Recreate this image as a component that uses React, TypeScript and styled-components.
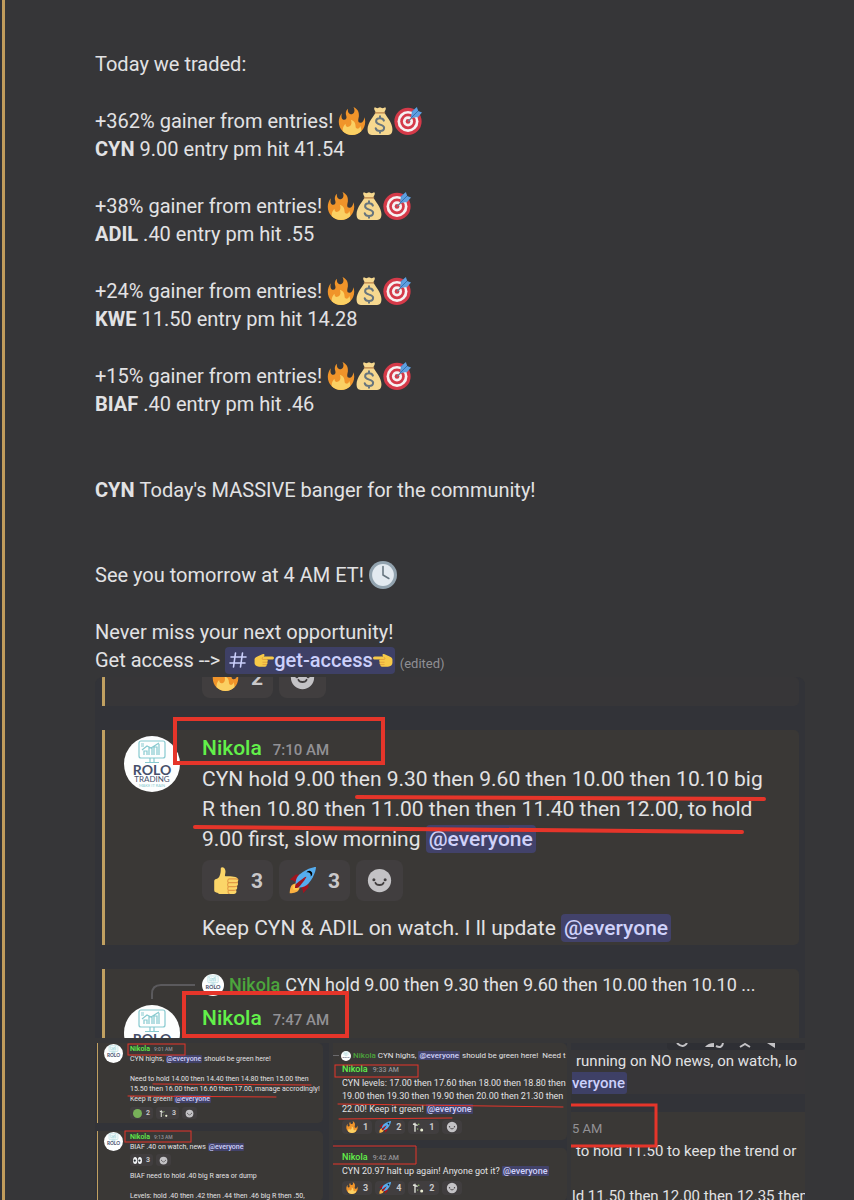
import React from "react";
import styled, { createGlobalStyle, css } from "styled-components";

type Size = "lg" | "md" | "sm";

/* Text and spacing scale of a quoted chat, from full size down to thumbnails */
const scale = {
  lg: { font: 21, line: 30, time: 15, timeLine: 15, reply: 18, replyLine: 28, avatar: 56, pad: 19, gutter: 22, chipH: 41, chipPad: 10, chipGap: 6, chipFont: 21, icon: 27, icGap: 12, radius: 8, bar: 3, mention: 4 },
  md: { font: 9, line: 13, time: 7, timeLine: 13, reply: 8, replyLine: 13, avatar: 0, pad: 9, gutter: 0, chipH: 14, chipPad: 4, chipGap: 3, chipFont: 9, icon: 12, icGap: 5, radius: 4, bar: 0, mention: 1 },
  sm: { font: 7, line: 10, time: 5, timeLine: 10, reply: 7, replyLine: 10, avatar: 19, pad: 6, gutter: 7, chipH: 12, chipPad: 3, chipGap: 3, chipFont: 7, icon: 9, icGap: 4, radius: 3, bar: 1, mention: 1 },
};

const Global = createGlobalStyle`
  * { box-sizing: border-box; }
  body {
    margin: 0;
    background: #363638;
    color: #e2e2e4;
    font-family: Roboto, "Liberation Sans", sans-serif;
    font-size: 20px;
  }
  a { text-decoration: none; }
  button { font: inherit; color: inherit; border: 0; }
  p { margin: 0; }
`;

const Message = styled.main`
  margin-left: 2px;
  border-left: 3px solid #c09c5c;
  box-shadow: -2px 0 0 #303136;
  padding: 50px 49px 0 90px;
`;

const Lines = styled.section<{ $gap?: number }>`
  line-height: 28px;
  margin-bottom: ${(p) => p.$gap ?? 29}px;
`;

const Line = styled.p`
  display: flex;
  align-items: center;
  gap: 5px;
  height: 28px;
  white-space: nowrap;
`;

const Icons = styled.span`
  display: flex;
`;

const ChannelLink = styled.a`
  display: flex;
  align-items: center;
  height: 27px;
  padding: 0 2px;
  border-radius: 4px;
  background: #3e4066;
  color: #ccd0fb;
  font-weight: 500;
`;

const Edited = styled.small`
  font-size: 13px;
  line-height: 20px;
  color: #8f8f94;
  align-self: flex-end;
`;

const Gallery = styled.section`
  display: grid;
  gap: 5px;
`;

const Thumbs = styled.div`
  display: grid;
  grid-template-columns: repeat(3, 1fr);
  gap: 4px;
`;

const Tile = styled.article<{ $height: number; $round?: string; $inset?: number }>`
  position: relative;
  overflow: hidden;
  height: ${(p) => p.$height}px;
  border-radius: ${(p) => p.$round ?? "0"};
  padding: 0 ${(p) => (p.$inset ? 6 : 0)}px 0 ${(p) => p.$inset ?? 0}px;
  background: #323338;
  min-width: 0;
`;

const Card = styled.div<{ $size: Size; $gap: number; $plain?: boolean }>`
  display: flex;
  gap: ${(p) => scale[p.$size].gutter}px;
  margin-bottom: ${(p) => p.$gap}px;
  padding-left: ${(p) => scale[p.$size].pad}px;
  border-left: ${(p) => scale[p.$size].bar}px solid #c0a061;
  border-radius: 0 5px 5px 0;
  background: ${(p) => (p.$plain ? "#373638" : "#3a3836")};
  white-space: nowrap;
`;

const Side = styled.div<{ $size: Size; $top: number }>`
  flex: none;
  width: ${(p) => scale[p.$size].avatar}px;
  padding-top: ${(p) => p.$top}px;
`;

const Body = styled.div<{ $top: number; $bottom: number }>`
  padding: ${(p) => p.$top}px 0 ${(p) => p.$bottom}px;
  min-width: 0;
`;

const ClippedTop = styled.div`
  display: flex;
  align-items: flex-end;
  height: 21px;
`;

const Spacer = styled.div<{ $h: number }>`
  height: ${(p) => p.$h}px;
`;

const Header = styled.header<{ $size: Size }>`
  display: flex;
  align-items: baseline;
  gap: ${(p) => Math.round(scale[p.$size].font / 2)}px;
  font-size: ${(p) => scale[p.$size].font}px;
  line-height: ${(p) => scale[p.$size].line}px;
`;

const Name = styled.strong<{ $dim?: boolean }>`
  font-weight: 500;
  color: ${(p) => (p.$dim ? "#4ca53c" : "#62f04a")};
`;

const Time = styled.time<{ $size: Size }>`
  font-size: ${(p) => scale[p.$size].time}px;
  line-height: ${(p) => scale[p.$size].timeLine}px;
  font-weight: 500;
  color: #929195;
`;

const Text = styled.p<{ $size: Size }>`
  font-size: ${(p) => scale[p.$size].font}px;
  line-height: ${(p) => scale[p.$size].line}px;
  min-height: ${(p) => scale[p.$size].line}px;
`;

const Reply = styled.p<{ $size: Size }>`
  display: flex;
  align-items: center;
  gap: ${(p) => scale[p.$size].mention + 1}px;
  font-size: ${(p) => scale[p.$size].reply}px;
  line-height: ${(p) => scale[p.$size].replyLine}px;
`;

const ReplyLead = styled.i`
  width: 6px;
  height: 1px;
  margin-left: -9px;
  background: #6b6a6d;
`;

const Mention = styled.a<{ $size: Size }>`
  padding: ${(p) => (p.$size === "lg" ? "2px 3px" : "0 1px")};
  border-radius: ${(p) => scale[p.$size].mention}px;
  background: #42426a;
  color: #d0d2fa;
  font-weight: 500;
`;

const Reactions = styled.div<{ $size: Size; $after: number }>`
  display: flex;
  gap: ${(p) => scale[p.$size].chipGap}px;
  margin-bottom: ${(p) => p.$after}px;
`;

const Chip = styled.button<{ $size: Size }>`
  ${(p) => {
    const s = scale[p.$size];
    return css`
      display: flex;
      align-items: center;
      gap: ${s.icGap}px;
      height: ${s.chipH}px;
      padding: 0 ${s.chipPad}px;
      border-radius: ${s.radius}px;
      font-size: ${s.chipFont}px;
    `;
  }}
  background: #413e3f;
  color: #c9c8ca;
  font-weight: 700;
`;

const Marks = styled.svg`
  position: absolute;
  inset: 0;
  width: 100%;
  height: 100%;
  pointer-events: none;
  fill: none;
  stroke: #e5352a;
  stroke-linecap: round;
`;

const Spine = styled.svg`
  display: block;
  margin-left: 27px;
  overflow: visible;
`;

const Glyph = styled.svg`
  display: block;
  flex: none;
`;

const Crop = styled.div`
  display: flex;
  flex-direction: column;
  font-size: 15px;
  line-height: 22px;
  white-space: nowrap;
`;

const CropTools = styled.div`
  display: flex;
  align-self: flex-end;
  gap: 14px;
  width: 138px;
  height: 7px;
  padding-left: 8px;
  background: #2e2f34;
  border-radius: 0 0 4px 4px;
`;

const CropRow = styled.p<{ $top?: number; $left?: number; $fill?: string }>`
  padding: ${(p) => p.$top ?? 0}px 0 0 ${(p) => p.$left ?? 1}px;
  background: ${(p) => p.$fill ?? "#373638"};
`;

const CropMention = styled.a`
  display: inline-block;
  padding-right: 2px;
  border-radius: 0 3px 3px 0;
  background: #3e4066;
  color: #ccd0fb;
  font-weight: 500;
`;

const CropTime = styled.time`
  display: block;
  font-size: 13px;
  color: #929195;
`;

const Band = styled.div`
  height: 18px;
  background: #323338;
`;

type IconProps = { s: number };

const Fire = ({ s }: IconProps) => (
  <Glyph width={s} height={s} viewBox="0 0 36 36" aria-hidden>
    <path fill="#f0942a" d="M35 19c0-2.062-.367-4.039-1.04-5.868-.46 5.389-3.333 8.157-6.335 6.868-2.812-1.208-.917-5.917-.777-8.164.236-3.809-.012-8.169-6.931-11.794 2.875 5.5.333 8.917-2.333 9.125-2.958.231-5.667-2.542-4.667-7.042-3.238 2.386-3.332 6.402-2.333 9 1.042 2.708-.042 4.958-2.583 5.208-2.84.28-4.418-3.041-2.963-8.333C2.52 10.965 1 14.805 1 19c0 9.389 7.611 17 17 17s17-7.611 17-17z" />
    <path fill="#fbd063" d="M28.394 23.999c.148 3.084-2.561 4.293-4.019 3.709-2.106-.843-1.541-2.291-2.083-5.291s-2.625-5.083-5.708-6c2.25 6.333-1.247 8.667-3.08 9.084-1.872.426-3.753-.001-3.968-4.007C7.352 23.668 6 26.676 6 30c0 .368.023.73.055 1.09C9.125 34.124 13.342 36 18 36s8.875-1.876 11.945-4.91c.032-.36.055-.722.055-1.09 0-2.187-.584-4.236-1.606-6.001z" />
  </Glyph>
);

const MoneyBag = ({ s }: IconProps) => (
  <Glyph width={s} height={s} viewBox="0 0 36 36" aria-hidden>
    <path fill="#f6d88f" d="M12.500 7C11.500 4.500 9.500 2 11 .500c1-.500 2.500 1 3.500 1S17 .200 18 .200s2 1.300 3.500 1.300S24 0 25 .500C26.500 2 24.500 4.500 23.500 7c2 4 10.500 13 10.500 21.500C34 34.500 31 36 27 36H9c-4 0-7-1.500-7-7.500C2 20 10.500 11 12.500 7z" />
    <path stroke="#b9814a" strokeWidth="1.800" strokeLinecap="round" d="M12 7.500h12" />
    <path fill="none" stroke="#67757e" strokeWidth="2.600" strokeLinecap="round" d="M23 17.500c-.600-2-2.500-3-5-3-3 0-5 1.500-5 3.900 0 5.700 10.300 2.800 10.300 8.300 0 2.500-2.300 4.100-5.300 4.100s-5-1.300-5.500-3.500M18 12v2.300M18 31v2.200" />
  </Glyph>
);

const Target = ({ s }: IconProps) => (
  <Glyph width={s} height={s} viewBox="0 0 36 36" aria-hidden>
    <circle cx="18" cy="18.500" r="17.500" fill="#d53a49" />
    <circle cx="18" cy="18.500" r="13.500" fill="#f6f2f3" />
    <circle cx="18" cy="18.500" r="10" fill="#d53a49" />
    <circle cx="18" cy="18.500" r="6.500" fill="#f6f2f3" />
    <circle cx="18" cy="18.500" r="3" fill="#d53a49" />
    <path stroke="#6e7f93" strokeWidth="1.800" d="M18 18.500l8-8" />
    <path fill="#4a90d0" d="M22 14l1-8.500L29.500 0l1.500 5z" />
    <path fill="#5e9fe0" d="M22 14l9-1L36 7l-5-2-2-4.500L24 6z" />
    <path stroke="#2f6fae" strokeWidth="1.200" d="M22 14l9-9" />
  </Glyph>
);

const Clock = ({ s }: IconProps) => (
  <Glyph width={s} height={s} viewBox="0 0 36 36" aria-hidden>
    <circle cx="18" cy="18" r="18" fill="#92a3af" />
    <circle cx="18" cy="18" r="14" fill="#e3eaf0" />
    <path fill="none" stroke="#66757f" strokeWidth="2" strokeLinecap="round" strokeLinejoin="round" d="M18 7v11l7.500 4.500" />
  </Glyph>
);

const Point = ({ s, flip }: IconProps & { flip?: boolean }) => (
  <Glyph width={s} height={s} viewBox="0 0 36 36" aria-hidden>
    <g transform={flip ? "translate(36 0) scale(-1 1)" : undefined}>
      <path fill="#f7c948" d="M1 17c0-3 4-5 8-6.500C12 9 14 7 17 7c2.500 0 2.500 3 .500 4.500H33c4 0 4 5.500 0 5.500H23c2.500.800 2.500 4 .500 4.800 1.500 1.500.800 4-1 4.500.800 2-.500 3.700-2.500 3.700H9c-5 0-8-3-8-7z" />
      <path fill="none" stroke="#d9913c" strokeWidth="1.200" strokeLinecap="round" d="M23.500 17H16c-1.500 0-2-2-.500-3.500M23.500 22H16M22.500 26.300H16" />
    </g>
  </Glyph>
);

const Hash = () => (
  <Glyph width="22" height="22" viewBox="0 0 22 22" aria-hidden>
    <path fill="none" stroke="#ccd0fb" strokeWidth="1.600" strokeLinecap="round" d="M8.500 4L6.500 18M15.500 4l-2 14M4 8h15M3 14h15" />
  </Glyph>
);

const Thumb = ({ s }: IconProps) => (
  <Glyph width={s} height={s} viewBox="0 0 36 36" aria-hidden>
    <path fill="#fbd568" d="M34.956 17.916c0-.503-.12-.975-.321-1.404-1.341-4.326-7.619-4.010-16.549-4.221-1.493-.035-.639-1.798-.115-5.668.341-2.517-1.282-6.382-4.010-6.382-4.498 0-.171 3.548-4.148 12.322-2.125 4.688-6.875 2.062-6.875 6.771v10.719c0 1.833.180 3.595 2.758 3.885C8.195 34.219 7.633 36 11.238 36h18.044c1.838 0 3.333-1.496 3.333-3.334 0-.762-.267-1.456-.698-2.018 1.020-.571 1.720-1.649 1.720-2.899 0-.760-.266-1.454-.696-2.015 1.023-.570 1.725-1.649 1.725-2.901 0-.909-.368-1.733-.961-2.336.757-.611 1.251-1.535 1.251-2.581z" />
    <path fill="none" stroke="#e29a45" strokeWidth="1.500" strokeLinecap="round" d="M34 20.300c-.800.500-2 .600-3 .600h-8.500M33 25.700c-.800.400-2 .500-3 .500h-7.500M31.500 30.700c-.800.300-1.500.400-2.500.400h-6.500M23 15.800h8c1.500 0 2.700 0 3.500.700M23.500 15.800c-3 0-3.500 5-.800 5.100-2.500.300-2.500 5-.200 5.300-2 .300-2 4.700 0 4.900-1.500.400-1.500 4 .500 4.500" />
  </Glyph>
);

const Rocket = ({ s }: IconProps) => (
  <Glyph width={s} height={s} viewBox="0 0 36 36" aria-hidden>
    <path fill="#a0141e" d="M1 17l8-7 16 1 1 16-7 8s.001-5.999-6-12-12-6-12-6z" />
    <path fill="#fbb040" d="M.973 35s-.036-7.979 2.985-11S15 21.187 15 21.187 14.999 29 11.999 32c-3 3-11.026 3-11.026 3z" />
    <circle cx="9" cy="27" r="4" fill="#ffcc4d" />
    <path fill="#55acee" d="M35.999 0s-10 0-22 10c-6 5-6 14-4 16s11 2 16-4c10-12 10-22 10-22z" />
    <path d="M26.999 5c-1.623 0-3.013.971-3.641 2.360.502-.227 1.055-.360 1.641-.360 2.209 0 4 1.791 4 4 0 .586-.133 1.139-.359 1.640 1.389-.627 2.359-2.017 2.359-3.640 0-2.209-1.791-4-4-4z" />
    <path fill="#a0141e" d="M8 28s0-4 1-5 13.001-10.999 14-10-9.001 13-10.001 14S8 28 8 28z" />
  </Glyph>
);

const Smile = ({ s }: IconProps) => (
  <Glyph width={s} height={s} viewBox="0 0 36 36" aria-hidden>
    <circle cx="18" cy="18" r="15.500" fill="#c3c2c5" />
    <circle cx="10.500" cy="17" r="2" fill="#423f40" />
    <circle cx="25.500" cy="17" r="2" fill="#423f40" />
    <path fill="none" stroke="#423f40" strokeWidth="2.400" strokeLinecap="round" d="M12.500 21c1.500 4 9.500 4 11 0" />
  </Glyph>
);

const Dot = ({ s }: IconProps) => (
  <Glyph width={s} height={s} viewBox="0 0 36 36" aria-hidden>
    <circle cx="18" cy="18" r="18" fill="#78b159" />
  </Glyph>
);

const Eyes = ({ s }: IconProps) => (
  <Glyph width={s} height={s} viewBox="0 0 36 36" aria-hidden>
    <ellipse cx="8.500" cy="18" rx="8.500" ry="14" fill="#f0f2f4" />
    <ellipse cx="27.500" cy="18" rx="8.500" ry="14" fill="#f0f2f4" />
    <circle cx="7" cy="18" r="4.500" fill="#292f33" />
    <circle cx="26" cy="18" r="4.500" fill="#292f33" />
  </Glyph>
);

const Sparks = ({ s }: IconProps) => (
  <Glyph width={s} height={s} viewBox="0 0 36 36" aria-hidden>
    <path fill="none" stroke="#e4e6de" strokeWidth="4" d="M9 32V10M3 9l14 4M9 5v6" />
    <circle cx="20" cy="10" r="2.500" fill="#8fb56b" />
    <circle cx="29" cy="27" r="4.500" fill="#e9ecd2" />
    <circle cx="17" cy="24" r="2" fill="#8fb56b" />
  </Glyph>
);

const Avatar = ({ s }: IconProps) => (
  <Glyph width={s} height={s} viewBox="0 0 56 56" role="img" aria-label="Rolo Trading">
    <circle cx="28" cy="28" r="28" fill="#fdfefe" />
    <g fill="none" stroke="#86c9cf" strokeWidth="1.200">
      <rect x="15" y="5" width="26" height="17" rx="2" />
      <path d="M26 22v4M30 22v4M21 26.500h14M20 19v-4h3v4M25 19v-7h3v7M30 19V11h3v8M35 19V8M17 8h3M17 10h3M18 14l5-4 4 2 8-5" />
    </g>
    <text x="28" y="39" textAnchor="middle" fontFamily="Lato, sans-serif" fontSize="14" fontWeight="700" fill="#46506b">ROLO</text>
    {s > 30 && (
      <>
        <text x="28" y="46" textAnchor="middle" fontFamily="Lato, sans-serif" fontSize="8" fill="#46506b">TRADING</text>
        <text x="28" y="51" textAnchor="middle" fontFamily="Lato, sans-serif" fontSize="4" fill="#86c9cf">MAKE IT RAIN</text>
      </>
    )}
  </Glyph>
);

const gainers = [
  { pct: "+362%", ticker: "CYN", result: "9.00 entry pm hit 41.54" },
  { pct: "+38%", ticker: "ADIL", result: ".40 entry pm hit .55" },
  { pct: "+24%", ticker: "KWE", result: "11.50 entry pm hit 14.28" },
  { pct: "+15%", ticker: "BIAF", result: ".40 entry pm hit .46" },
];

type Reaction = [React.ComponentType<IconProps>, number?];

const ReactionRow = ({ size, items, after = 0 }: { size: Size; items: Reaction[]; after?: number }) => (
  <Reactions $size={size} $after={after}>
    {items.map(([Icon, count], i) => (
      <Chip key={i} $size={size} type="button" aria-label={count ? undefined : "Add reaction"}>
        <Icon s={scale[size].icon} />
        {count}
      </Chip>
    ))}
  </Reactions>
);

const Author = ({ size, time }: { size: Size; time: string }) => (
  <Header $size={size}>
    <Name>Nikola</Name>
    <Time $size={size}>{time}</Time>
  </Header>
);

const Everyone = ({ size }: { size: Size }) => (
  <Mention $size={size} href="#everyone">@everyone</Mention>
);

const MainShot = () => (
  <Tile $height={361} $round="8px 8px 0 0" $inset={7}>
    <Card $size="lg" $gap={24} $plain>
      <Side $size="lg" $top={0} />
      <Body $top={0} $bottom={8}>
        <ClippedTop>
          <ReactionRow size="lg" items={[[Fire, 2], [Smile]]} />
        </ClippedTop>
      </Body>
    </Card>
    <Card $size="lg" $gap={24}>
      <Side $size="lg" $top={6}>
        <Avatar s={56} />
      </Side>
      <Body $top={3} $bottom={2}>
        <Author size="lg" time="7:10 AM" />
        <Spacer $h={1} />
        <Text $size="lg">CYN hold 9.00 then 9.30 then 9.60 then 10.00 then 10.10 big</Text>
        <Text $size="lg">R then 10.80 then 11.00 then then 11.40 then 12.00, to hold</Text>
        <Text $size="lg">9.00 first, slow morning <Everyone size="lg" /></Text>
        <Spacer $h={6} />
        <ReactionRow size="lg" items={[[Thumb, 3], [Rocket, 3], [Smile]]} after={12} />
        <Text $size="lg">Keep CYN &amp; ADIL on watch. I ll update <Everyone size="lg" /></Text>
      </Body>
    </Card>
    <Card $size="lg" $gap={0}>
      <Side $size="lg" $top={15}>
        <Spine width="44" height="21">
          <path d="M1 15V10Q1 1 10 1H44" fill="none" stroke="#5b5a5d" strokeWidth="2" />
        </Spine>
        <Avatar s={56} />
      </Side>
      <Body $top={2} $bottom={2}>
        <Reply $size="lg">
          <Avatar s={22} />
          <Name $dim>Nikola</Name>
          <span>CYN hold 9.00 then 9.30 then 9.60 then 10.00 then 10.10 ...</span>
        </Reply>
        <Spacer $h={4} />
        <Author size="lg" time="7:47 AM" />
      </Body>
    </Card>
    <Marks strokeWidth="4">
      <rect x="80" y="42" width="208" height="44" />
      <path d="M262 120L669 122M100 150L647 155" />
      <rect x="89" y="316" width="163" height="43" />
    </Marks>
  </Tile>
);

const MorningShot = () => (
  <Tile $height={157} $inset={2}>
    <Card $size="sm" $gap={8}>
      <Side $size="sm" $top={1}>
        <Avatar s={19} />
      </Side>
      <Body $top={1} $bottom={4}>
        <Author size="sm" time="9:01 AM" />
        <Text $size="sm">CYN highs, <Everyone size="sm" /> should be green here!</Text>
        <Text $size="sm" />
        <Text $size="sm">Need to hold 14.00 then 14.40 then 14.80 then 15.00 then</Text>
        <Text $size="sm">15.50 then 16.00 then 16.60 then 17.00, manage accrodingly!</Text>
        <Text $size="sm">Keep it green! <Everyone size="sm" /></Text>
        <Spacer $h={3} />
        <ReactionRow size="sm" items={[[Dot, 2], [Sparks, 3], [Smile]]} />
      </Body>
    </Card>
    <Card $size="sm" $gap={0}>
      <Side $size="sm" $top={1}>
        <Avatar s={19} />
      </Side>
      <Body $top={1} $bottom={0}>
        <Author size="sm" time="9:13 AM" />
        <Text $size="sm">BIAF .40 on watch, news <Everyone size="sm" /></Text>
        <Spacer $h={2} />
        <ReactionRow size="sm" items={[[Eyes, 3], [Smile]]} after={5} />
        <Text $size="sm">BIAF need to hold .40 big R area or dump</Text>
        <Text $size="sm" />
        <Text $size="sm">Levels: hold .40 then .42 then .44 then .46 big R then .50,</Text>
      </Body>
    </Card>
    <Marks strokeWidth="1">
      <rect x="33" y="1" width="57" height="11" />
      <path d="M58 41L216 42M33 53L181 54" />
      <rect x="30" y="88" width="66" height="11" />
    </Marks>
  </Tile>
);

const LevelsShot = () => (
  <Tile $height={157}>
    <Card $size="md" $gap={8}>
      <Body $top={6} $bottom={6}>
        <Reply $size="md">
          <ReplyLead />
          <Avatar s={10} />
          <Name $dim>Nikola</Name>
          <span>CYN highs, <Everyone size="md" /> should be green here!&nbsp; Need t</span>
        </Reply>
        <Spacer $h={1} />
        <Author size="md" time="9:33 AM" />
        <Text $size="md">CYN levels: 17.00 then 17.60 then 18.00 then 18.80 then</Text>
        <Text $size="md">19.00 then 19.30 then 19.90 then 20.00 then 21.30 then</Text>
        <Text $size="md">22.00! Keep it green! <Everyone size="md" /></Text>
        <Spacer $h={4} />
        <ReactionRow size="md" items={[[Fire, 1], [Rocket, 2], [Sparks, 1], [Smile]]} />
      </Body>
    </Card>
    <Card $size="md" $gap={0}>
      <Body $top={3} $bottom={6}>
        <Author size="md" time="9:42 AM" />
        <Text $size="md">CYN 20.97 halt up again! Anyone got it? <Everyone size="md" /></Text>
        <Spacer $h={3} />
        <ReactionRow size="md" items={[[Fire, 3], [Rocket, 4], [Sparks, 2], [Smile]]} />
      </Body>
    </Card>
    <Marks strokeWidth="1">
      <rect x="2" y="22" width="83" height="12" />
      <path d="M5 61L230 64M6 76L119 75M0 103H83V121H0" />
    </Marks>
  </Tile>
);

const TrendShot = () => (
  <Tile $height={157}>
    <Crop>
      <CropTools>
        <Glyph width="16" height="6"><path d="M2 0Q8 6 12 0" fill="none" stroke="#c3c2c5" strokeWidth="2" /></Glyph>
        <Glyph width="20" height="6"><path d="M0 4Q3 0 9 0V4z" fill="#c3c2c5" /><path d="M11 3q6 3 7-3" fill="none" stroke="#c3c2c5" strokeWidth="2" /></Glyph>
        <Glyph width="14" height="6"><path d="M1 4l5-3 5 3" fill="none" stroke="#c3c2c5" strokeWidth="2" /></Glyph>
        <Glyph width="14" height="6"><path d="M0 0h8v5z" fill="#c3c2c5" /></Glyph>
      </CropTools>
      <CropRow $left={5}>running on NO news, on watch, lo</CropRow>
      <CropRow><CropMention href="#everyone">veryone</CropMention></CropRow>
      <Band />
      <CropRow $fill="#3a3836" $top={6}><CropTime>5 AM</CropTime></CropRow>
      <CropRow $fill="#3a3836" $left={5}>to hold 11.50 to keep the trend or</CropRow>
      <CropRow $fill="#3a3836" $top={23}>ld 11.50 then 12.00 then 12.35 then</CropRow>
    </Crop>
    <Marks strokeWidth="3">
      <path d="M0 62H85V103H0" />
    </Marks>
  </Tile>
);

export default function App() {
  return (
    <>
      <Global />
      <Message>
        <Lines><Line>Today we traded:</Line></Lines>
        {gainers.map((g, i) => (
          <Lines key={g.ticker} $gap={i === gainers.length - 1 ? 58 : 29}>
            <Line>
              {g.pct} gainer from entries!
              <Icons><Fire s={28} /><MoneyBag s={28} /><Target s={28} /></Icons>
            </Line>
            <Line><b>{g.ticker}</b>{g.result}</Line>
          </Lines>
        ))}
        <Lines $gap={57}><Line><b>CYN</b>Today's MASSIVE banger for the community!</Line></Lines>
        <Lines><Line>See you tomorrow at 4 AM ET!<Clock s={28} /></Line></Lines>
        <Lines $gap={3}>
          <Line>Never miss your next opportunity!</Line>
          <Line>
            Get access --&gt;
            <ChannelLink href="#get-access">
              <Hash />&nbsp;<Point s={20} />get-access<Point s={20} flip />
            </ChannelLink>
            <Edited>(edited)</Edited>
          </Line>
        </Lines>
        <Gallery>
          <MainShot />
          <Thumbs>
            <MorningShot />
            <LevelsShot />
            <TrendShot />
          </Thumbs>
        </Gallery>
      </Message>
    </>
  );
}
